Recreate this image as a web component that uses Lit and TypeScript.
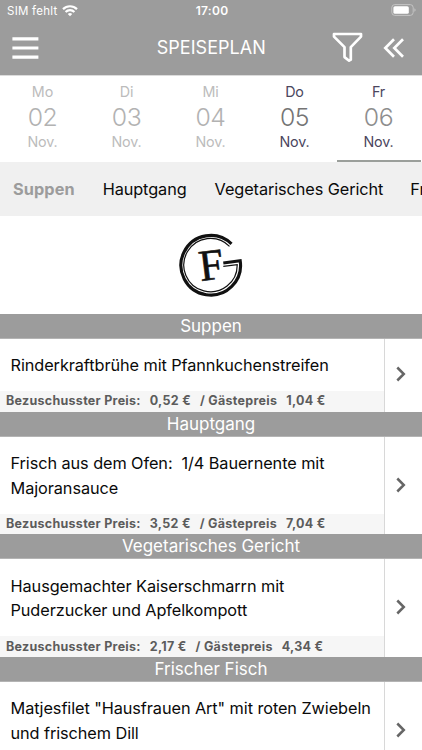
import { LitElement, html, css, svg, nothing } from "lit";
import { customElement, property } from "lit/decorators.js";
import { classMap } from "lit/directives/class-map.js";

interface Day { name: string; num: string; state: string; }
interface Dish { category: string; lines: string[]; price?: string; guest?: string; }

const DAYS: Day[] = [
  { name: "Mo", num: "02", state: "past" },
  { name: "Di", num: "03", state: "past" },
  { name: "Mi", num: "04", state: "past" },
  { name: "Do", num: "05", state: "open" },
  { name: "Fr", num: "06", state: "selected" },
];

const TABS = ["Suppen", "Hauptgang", "Vegetarisches Gericht", "Frischer Fisch"];

const DISHES: Dish[] = [
  { category: "Suppen", lines: ["Rinderkraftbrühe mit Pfannkuchenstreifen"], price: "0,52 €", guest: "1,04 €" },
  { category: "Hauptgang", lines: ["Frisch aus dem Ofen:\u00a0 1/4 Bauernente mit", "Majoransauce"], price: "3,52 €", guest: "7,04 €" },
  { category: "Vegetarisches Gericht", lines: ["Hausgemachter Kaiserschmarrn mit", "Puderzucker und Apfelkompott"], price: "2,17 €", guest: "4,34 €" },
  { category: "Frischer Fisch", lines: ["Matjesfilet \"Hausfrauen Art\" mit roten Zwiebeln", "und frischem Dill"] },
];

@customElement("app-status-bar")
export class StatusBar extends LitElement {
  static styles = css`
    :host { display: grid; grid-template-columns: 1fr auto 1fr; align-items: center; height: 21px; padding: 0 5px 1px 7px; color: #fff; box-sizing: border-box; }
    .carrier { display: flex; align-items: center; gap: 5px; padding-top: 1px; font-size: 11.5px; letter-spacing: 0.25px; }
    .time { font-size: 12px; font-weight: 600; letter-spacing: 0.3px; }
    .battery { justify-self: end; }
    svg { display: block; }
  `;
  render() {
    return html`
      <div class="carrier"><span>SIM fehlt</span>
        <svg width="16" height="12" viewBox="0 0 16 12" fill="none" stroke="#fff" stroke-width="2.2">
          <path d="M1 4.1a10 10 0 0 1 14 0"/><path d="M3.6 7a6.2 6.2 0 0 1 8.8 0"/>
          <path d="M8 11.3 5.8 9.1a3.1 3.1 0 0 1 4.4 0z" fill="#fff" stroke="none"/>
        </svg>
      </div>
      <div class="time">17:00</div>
      <svg class="battery" width="26" height="12" viewBox="0 0 26 12">
        <rect x="0.8" y="0.6" width="21.4" height="10.8" rx="3" fill="none" stroke="#c4c4c4"/>
        <rect x="2.4" y="2.2" width="15.4" height="7.6" rx="1.6" fill="#fff"/>
        <path d="M23.4 4.2v3.6q1.2-.5 1.2-1.8t-1.2-1.8" fill="#c4c4c4"/>
      </svg>`;
  }
}

@customElement("app-dish")
export class DishRow extends LitElement {
  @property({ attribute: false }) dish!: Dish;
  static styles = css`
    :host { display: block; }
    .heading { height: 25px; box-sizing: border-box; background: #9c9c9c; border-bottom: 1px solid #b4b4b4; color: #fff; text-align: center; font-size: 17px; line-height: 25.6px; }
    .card { display: grid; grid-template-columns: 384px 1fr; background: #fff; }
    .name { padding: 14.5px 0 13.8px 10.5px; font-size: 16.3px; line-height: 24.4px; letter-spacing: -0.08px; color: #0a0a0a; white-space: pre; }
    .price { display: flex; height: 20.5px; box-sizing: border-box; align-items: center; padding: 0 0 1px 6px; background: #f6f6f6; color: #5c5c5c; font-size: 12.5px; font-weight: 700; letter-spacing: 0.28px; white-space: nowrap; }
    .value { margin-left: 9px; }
    .guest { margin-left: 9px; }
    .more { display: flex; align-items: center; border-left: 1px solid #d8d8d8; padding: 0 0 2px 11px; }
    svg { display: block; }
  `;
  render() {
    const d = this.dish;
    return html`
      <div class="heading">${d.category}</div>
      <div class="card">
        <div>
          <div class="name">${d.lines.map((l) => html`<div>${l}</div>`)}</div>
          <div class="price">${d.price
            ? html`<span>Bezuschusster Preis:</span><span class="value">${d.price}</span><span class="guest">/ Gästepreis</span><span class="value">${d.guest}</span>`
            : nothing}</div>
        </div>
        <div class="more">
          <svg width="10" height="16" viewBox="0 0 10 16" fill="none" stroke="#666" stroke-width="2.5"><path d="M1.3 1.5 7.8 8l-6.5 6.5"/></svg>
        </div>
      </div>`;
  }
}

const emblem = svg`
  <g fill="none" stroke="#111">
    <path d="M53.5 11.9A29.8 29.8 0 1 0 62.2 28.8L45.3 31" stroke-width="3.1"/>
    <path d="M51.5 14.3A26.7 26.7 0 1 0 59.2 32.6L45.3 34.4" stroke-width="1.2"/>
  </g>`;

@customElement("app-root")
export class AppRoot extends LitElement {
  static styles = css`
    :host { display: block; height: 750px; overflow: hidden; background: #fff; font-family: Inter, "Liberation Sans", sans-serif; }
    .top { height: 75px; background: #9c9c9c; border-bottom: 1px solid #dcdcdc; }
    .bar { display: grid; grid-template-columns: 1fr auto 1fr; align-items: center; height: 53px; padding: 0 17px 0 12px; color: #fff; }
    .title { padding-left: 5.5px; font-size: 18px; letter-spacing: 0.03px; }
    .tools { display: flex; justify-content: flex-end; align-items: center; gap: 20px; }
    svg { display: block; }
    .days { display: grid; grid-template-columns: repeat(5, 84px); height: 86px; padding-left: 0.5px; }
    .day { box-sizing: border-box; display: flex; flex-direction: column; align-items: center; padding-top: 7px; color: #bcbcbc; font-size: 14.3px; line-height: 18px; letter-spacing: -0.1px; border-bottom: 2px solid transparent; }
    .num { font-size: 24.8px; font-weight: 300; line-height: 32px; letter-spacing: -0.4px; }
    .past .num { color: #b2b2b2; }
    .open, .selected { color: #4b465e; }
    .open .num { color: #747474; }
    .selected .num { color: #8e8e8e; }
    .selected { border-bottom-color: #9b9f9b; }
    .tabs { display: flex; align-items: center; gap: 28px; height: 54px; box-sizing: border-box; padding: 0 0 1px 13px; background: #f0f0f0; color: #0a0a0a; font-size: 16.3px; letter-spacing: -0.09px; white-space: nowrap; overflow: hidden; }
    .active { color: #9c9c9c; font-weight: 700; letter-spacing: 0.08px; }
    .tabs span:last-child { margin-left: -1px; }
    .logo { display: flex; justify-content: center; align-items: center; height: 97.5px; }
    .letter { font-family: "Liberation Serif", serif; font-size: 44px; fill: #111; stroke: #111; stroke-width: 0.6px; }
  `;
  render() {
    return html`
      <div class="top">
        <app-status-bar></app-status-bar>
        <div class="bar">
          <svg width="28" height="24" viewBox="0 0 28 24" stroke="#fff" stroke-width="3.2"><path d="M0.4 2.8h26M0.4 12h26M0.4 21.2h26"/></svg>
          <div class="title">SPEISEPLAN</div>
          <div class="tools">
            <svg width="31" height="31" viewBox="0 0 31 31" fill="none" stroke="#fff" stroke-width="2.7" stroke-linejoin="round"><path d="M2 2h27v2.6L18.8 15.1v12.6l-1.7 1-4.6-3.6v-10L2 4.6z"/></svg>
            <svg width="22" height="20" viewBox="0 0 22 20" fill="none" stroke="#fff" stroke-width="2.7"><path d="M11 1.3 2.3 10l8.7 8.7M20 1.3 11.3 10l8.7 8.7"/></svg>
          </div>
        </div>
      </div>
      <div class="days">${DAYS.map((d) => html`
        <div class=${classMap({ day: true, [d.state]: true })}><span>${d.name}</span><span class="num">${d.num}</span><span>Nov.</span></div>`)}</div>
      <div class="tabs">${TABS.map((t, i) => html`<span class=${classMap({ active: i === 0 })}>${t}</span>`)}</div>
      <div class="logo">
        <svg width="66" height="66" viewBox="0 0 66 66">${emblem}<text class="letter" x="20.8" y="47.8" transform="rotate(-7 32 33)">F</text></svg>
      </div>
      ${DISHES.map((d) => html`<app-dish .dish=${d}></app-dish>`)}`;
  }
}
